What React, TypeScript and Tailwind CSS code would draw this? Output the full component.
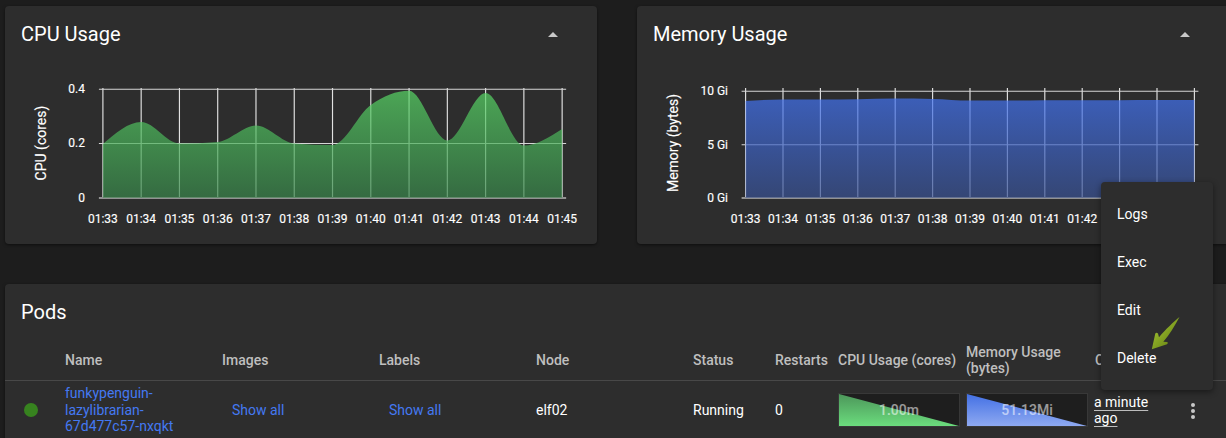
import type { ReactNode } from 'react';

const TIMES = Array.from({ length: 13 }, (_, i) => `01:${33 + i}`);

// Monotone cubic interpolation through the data points.
function monotone(p: number[][]) {
  const n = p.length;
  const s = p.slice(1).map((q, i) => (q[1] - p[i][1]) / (q[0] - p[i][0]));
  const m = p.map((_, i) => {
    if (i === 0 || i === n - 1) return 0;
    const a = s[i - 1];
    const b = s[i];
    return (Math.sign(a) + Math.sign(b)) * Math.min(Math.abs(a), Math.abs(b), Math.abs(a + b) / 4);
  });
  m[0] = (3 * s[0] - m[1]) / 2;
  m[n - 1] = (3 * s[n - 2] - m[n - 2]) / 2;
  let d = `M${p[0][0]},${p[0][1]}`;
  for (let i = 1; i < n; i++) {
    const h = (p[i][0] - p[i - 1][0]) / 3;
    d += `C${p[i - 1][0] + h},${p[i - 1][1] + h * m[i - 1]} ${p[i][0] - h},${p[i][1] - h * m[i]} ${p[i][0]},${p[i][1]}`;
  }
  return d;
}

type ChartProps = {
  id: string;
  x0: number;
  step: number;
  ticks: { y: number; label: string }[];
  values: number[];
  top: string;
  bottom: string;
  yLabel: string;
  yLabelX: number;
  yLabelY: number;
  tickX: number;
};

function Chart({ id, x0, step, ticks, values, top, bottom, yLabel, yLabelX, yLabelY, tickX }: ChartProps) {
  const pts = values.map((v, i) => [x0 + i * step, v]);
  const end = x0 + 12 * step;
  return (
    <svg className="block h-[182px] w-[592px]" viewBox="0 56 592 182">
      <defs>
        <linearGradient id={id} x1="0" x2="0" y1="83" y2="192" gradientUnits="userSpaceOnUse">
          <stop offset="0" stopColor={top} />
          <stop offset="1" stopColor={bottom} />
        </linearGradient>
      </defs>
      {pts.map(([x]) => (
        <line key={x} x1={x} x2={x} y1="82" y2="192" stroke="#e2e2e2" strokeWidth="1.15" />
      ))}
      {ticks.map((t, i) => (
        <line key={t.label} x1={x0 - 4} x2={end + 4} y1={t.y} y2={t.y} stroke={i ? '#d6d6d6' : '#929292'} strokeWidth={i ? 1.1 : 2} />
      ))}
      <path d={`${monotone(pts)}V191.8H${x0}Z`} fill={`url(#${id})`} fillOpacity="0.7" />
      <g fill="#fff" stroke="#fff" strokeWidth="0.15" fontSize="12">
        {ticks.map((t) => (
          <text key={t.label} x={tickX} y={t.y + 3.8} textAnchor="end">{t.label}</text>
        ))}
        {TIMES.map((t, i) => (
          <text key={t} x={x0 + i * step} y="217" textAnchor="middle">{t}</text>
        ))}
      </g>
      <text transform={`translate(${yLabelX} ${yLabelY}) rotate(-90)`} textAnchor="middle" fill="#fff" stroke="#fff" strokeWidth="0.15" fontSize="14">{yLabel}</text>
    </svg>
  );
}

function ChartCard({ title, children }: { title: string; children: ReactNode }) {
  return (
    <section className="h-[238px] w-[592px] shrink-0 overflow-hidden rounded bg-[#2d2d2d] shadow-[0_1px_3px_rgba(0,0,0,0.5)]">
      <header className="flex h-14 items-center justify-between pr-[39px] pl-4">
        <h2 className="text-[20px] leading-6">{title}</h2>
        <svg className="h-[5px] w-[10px]" viewBox="0 0 10 5"><path d="M0 5 5 0l5 5z" fill="#c8c8c8" /></svg>
      </header>
      {children}
    </section>
  );
}

function Spark({ id, from, to, label }: { id: string; from: string; to: string; label: string }) {
  return (
    <div className="-ml-px grid h-[34px] w-[122px] place-items-center border border-[#383838] bg-[#1e1e1e]">
      <svg className="col-start-1 row-start-1 h-8 w-[120px]" viewBox="0 0 120 32">
        <defs>
          <linearGradient id={id} x1="0" x2="0" y1="0" y2="1">
            <stop offset="0" stopColor={from} />
            <stop offset="1" stopColor={to} />
          </linearGradient>
        </defs>
        <path d="M0 0 120 32H0z" fill={`url(#${id})`} />
      </svg>
      <span className="z-10 col-start-1 row-start-1 font-medium text-white/55">{label}</span>
    </div>
  );
}

const COLS = 'grid grid-cols-[60px_157px_157px_157px_157px_82px_64px_128px_128px_82px_49px] items-center';

export default function App() {
  return (
    <div className="relative h-[438px] w-[1226px] overflow-hidden bg-[#1d1d1d] pt-1.5 pl-[5px] font-[Roboto,sans-serif] text-[14px] leading-[16.5px] text-white">
      <div className="flex gap-10">
        <ChartCard title="CPU Usage">
          <Chart
            id="cpu" x0={97.9} step={38.27} tickX={80} yLabelX={41} yLabelY={137}
            ticks={[{ y: 192, label: '0' }, { y: 137.5, label: '0.2' }, { y: 83.3, label: '0.4' }]}
            values={[138, 116, 137.5, 136, 119.5, 137.5, 139, 99, 84.8, 134.5, 87, 139.5, 123]}
            top="#59da67" bottom="#38854a" yLabel="CPU (cores)"
          />
        </ChartCard>
        <ChartCard title="Memory Usage">
          <Chart
            id="memory" x0={108.6} step={37.4} tickX={91} yLabelX={41} yLabelY={137}
            ticks={[{ y: 192, label: '0 Gi' }, { y: 138.7, label: '5 Gi' }, { y: 85.3, label: '10 Gi' }]}
            values={[95, 93.5, 93.5, 93.2, 92.6, 93, 94.6, 94.6, 94.2, 94.2, 94.2, 94, 94]}
            top="#4376fb" bottom="#385193" yLabel="Memory (bytes)"
          />
        </ChartCard>
      </div>

      <section className="mt-10 h-[170px] w-[1232px] rounded bg-[#2d2d2d] shadow-[0_1px_3px_rgba(0,0,0,0.5)]">
        <h2 className="flex h-14 items-center pl-4 text-[20px] leading-6">Pods</h2>
        <div className={`${COLS} h-[41px] border-b border-[#484848] font-medium text-[#bfbfbf]`}>
          <span />
          <span>Name</span>
          <span>Images</span>
          <span>Labels</span>
          <span>Node</span>
          <span>Status</span>
          <span>Restarts</span>
          <span className="-ml-px whitespace-nowrap">CPU Usage (cores)</span>
          <span className="-ml-px">Memory Usage (bytes)</span>
          <span>Created</span>
        </div>
        <div className={`${COLS} h-[58px]`}>
          <span className="ml-[19px] size-[14px] rounded-full bg-[#37831f]" />
          <a className="text-[#4479f2]">funkypenguin-<br />lazylibrarian-<br />67d477c57-nxqkt</a>
          <a className="pl-[10px] text-[#4479f2]">Show all</a>
          <a className="pl-[10px] text-[#4479f2]">Show all</a>
          <span>elf02</span>
          <span>Running</span>
          <span>0</span>
          <Spark id="podCpu" from="#4c965a" to="#6bdc7d" label="1.00m" />
          <Spark id="podMemory" from="#4370e4" to="#8ea9f1" label="51.13Mi" />
          <span className="-ml-px underline decoration-[#bdbdbd] decoration-1 underline-offset-[3px] [text-decoration-skip-ink:none]">a minute<br />ago</span>
          <svg className="mt-0.5 ml-[14px] h-4 w-1" viewBox="0 0 4 16" fill="#c8c8c8"><circle cx="2" cy="2" r="2" /><circle cx="2" cy="8" r="2" /><circle cx="2" cy="14" r="2" /></svg>
        </div>
      </section>

      <div className="absolute top-[182px] left-[1101px] flex h-[208px] w-28 flex-col rounded bg-[#2d2d2d] py-2 pl-4 shadow-[0_2px_6px_rgba(0,0,0,0.45)]">
        {['Logs', 'Exec', 'Edit', 'Delete'].map((item) => (
          <button key={item} className="flex h-12 items-center">{item}</button>
        ))}
      </div>
      <svg className="absolute top-[316px] left-[1150px] h-[34px] w-[31px]" viewBox="0 0 31 34">
        <defs>
          <linearGradient id="arrow" x1="0" x2="1" y1="0" y2="1">
            <stop offset=".3" stopColor="#93b32b" />
            <stop offset=".75" stopColor="#6f8c17" />
          </linearGradient>
        </defs>
        <path d="M29.5 1C24 5.5 15.5 13.5 9 21.2L8 17.5Q6.5 15.8 5.3 17.5L1.8 33.2 17 28.2Q18.8 26.8 17.2 26L13.3 25.8C19.5 18.5 24.5 10.5 29.5 1Z" fill="url(#arrow)" />
      </svg>
    </div>
  );
}
